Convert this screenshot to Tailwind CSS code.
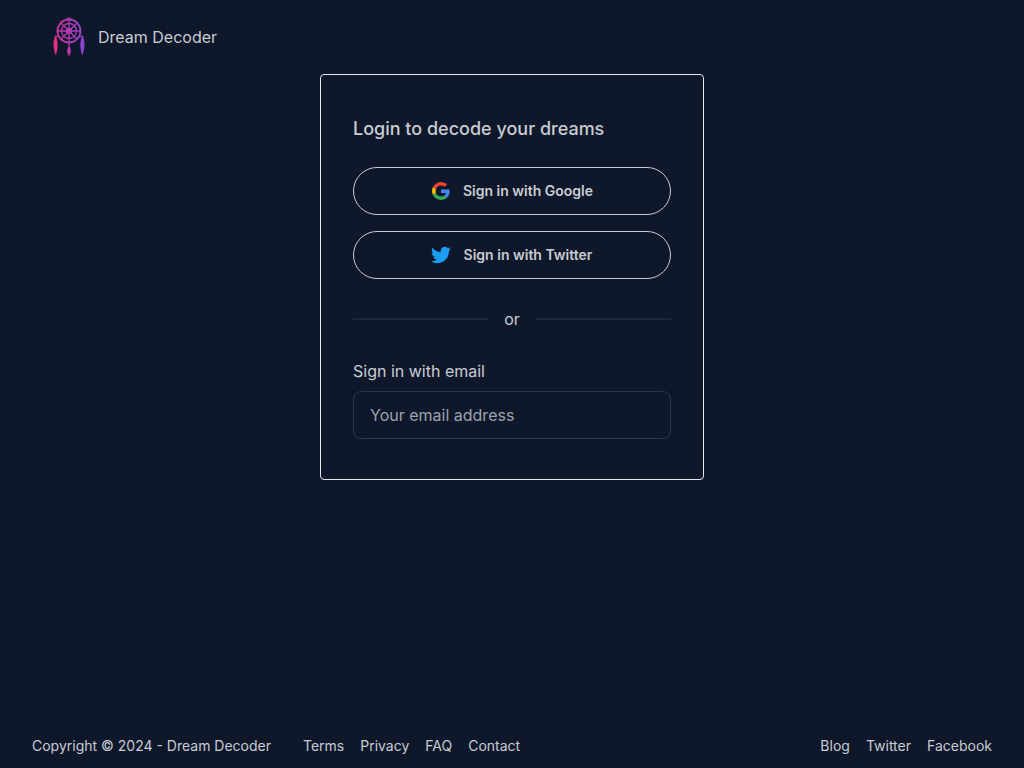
<!doctype html>
<html lang="en">
  <head>
    <meta charset="UTF-8" />
    <title>Dream Decoder</title>
    <script src="https://cdn.jsdelivr.net/npm/@tailwindcss/browser@4"></script>
  </head>

  <body class="bg-[#0f172a] text-[#c8ccd3] font-['Inter',sans-serif] h-[768px] overflow-hidden flex flex-col">
    <header class="h-[74px] pl-[52px] flex items-center gap-[12px] shrink-0">
      <svg width="34" height="40" viewBox="0 0 34 40" fill="none" class="mt-[-1px]">
        <defs>
          <linearGradient id="dc" x1="0" y1="0" x2="34" y2="0" gradientUnits="userSpaceOnUse">
            <stop offset="0" stop-color="#d8329a" />
            <stop offset="1" stop-color="#8e44d0" />
          </linearGradient>
        </defs>
        <g stroke="url(#dc)">
          <path d="M15 2.500C15 .500 19 .500 19 2.500" stroke-width="1.200" />
          <circle cx="17" cy="14" r="11.500" stroke-width="1.800" />
          <circle cx="17" cy="14" r="7.500" stroke-width="1.300" />
          <circle cx="17" cy="14" r="2.500" stroke-width="1.300" />
          <path d="M17 3V25M6 14H28M9.200 6.200L24.800 21.800M24.800 6.200L9.200 21.800" stroke-width="1.300" />
          <path d="M7 20L3.500 19M27 20L30.500 19M17 26V30" stroke-width="1.200" />
        </g>
        <path d="M3.500 18C6.300 24 6.300 31 3.800 38.500C.800 31 .800 24 3.500 18Z" fill="#e0307f" />
        <path d="M17 29C19.500 32 19.500 35.500 17 39.500C14.500 35.500 14.500 32 17 29Z" fill="#c038a8" />
        <path d="M30.500 18C33.200 24 33.200 31 30.200 38.500C27.700 31 27.700 24 30.500 18Z" fill="#8e44d0" />
      </svg>
      <span class="text-base leading-6">Dream Decoder</span>
    </header>

    <main class="flex-1 flex justify-center items-start">
      <div class="w-[384px] h-[406px] border border-[#e5e7eb] rounded px-8 pt-[40px]">
        <h1 class="text-lg leading-7 font-medium">Login to decode your dreams</h1>

        <button class="mt-[24px] w-full h-12 rounded-full border border-[#c8ccd3] flex items-center justify-center gap-3 text-sm font-semibold">
          <span class="w-5 flex justify-center">
            <svg width="18" height="18" viewBox="0 0 48 48">
              <path fill="#EA4335" d="M24 9.500c3.540 0 6.710 1.220 9.210 3.600l6.850-6.850C35.900 2.380 30.470 0 24 0 14.620 0 6.510 5.380 2.560 13.220l7.980 6.190C12.430 13.720 17.740 9.500 24 9.500z" />
              <path fill="#4285F4" d="M46.980 24.550c0-1.570-.150-3.090-.38-4.550H24v9.020h12.940c-.580 2.960-2.260 5.480-4.780 7.180l7.730 6c4.510-4.180 7.090-10.360 7.090-17.650z" />
              <path fill="#FBBC05" d="M10.530 28.590c-.480-1.450-.760-2.990-.760-4.590s.270-3.140.760-4.590l-7.980-6.190C.920 16.460 0 20.120 0 24c0 3.880.920 7.540 2.560 10.780l7.970-6.190z" />
              <path fill="#34A853" d="M24 48c6.480 0 11.930-2.130 15.890-5.810l-7.730-6c-2.150 1.450-4.920 2.300-8.160 2.300-6.260 0-11.570-4.220-13.470-9.910l-7.980 6.190C6.510 42.620 14.620 48 24 48z" />
            </svg>
          </span>
          <span>Sign in with Google</span>
        </button>

        <button class="mt-4 w-full h-12 rounded-full border border-[#c8ccd3] flex items-center justify-center gap-3 text-sm font-semibold">
          <svg width="20" height="20" viewBox="0 0 24 24" class="-translate-x-px">
            <path fill="#1d9bf0" d="M23.950 4.570a10 10 0 0 1-2.820.770 4.960 4.960 0 0 0 2.160-2.720c-.950.550-2 .950-3.130 1.180a4.920 4.920 0 0 0-8.380 4.480C7.690 8.100 4.070 6.130 1.640 3.160a4.820 4.820 0 0 0-.660 2.470c0 1.710.870 3.210 2.190 4.100a4.900 4.900 0 0 1-2.230-.620v.060a4.920 4.920 0 0 0 3.950 4.830 5 5 0 0 1-2.210.080 4.940 4.940 0 0 0 4.600 3.420A9.870 9.870 0 0 1 0 19.540a14 14 0 0 0 7.560 2.210c9.050 0 14-7.500 14-13.980 0-.210 0-.420-.020-.630a9.940 9.940 0 0 0 2.410-2.570z" />
          </svg>
          <span>Sign in with Twitter</span>
        </button>

        <div class="mt-[28px] flex items-center gap-4">
          <div class="flex-1 h-0.5 bg-[#1e2738]"></div>
          <span class="text-base leading-6">or</span>
          <div class="flex-1 h-0.5 bg-[#1e2738]"></div>
        </div>

        <label class="block mt-[28px] text-base leading-6">Sign in with email</label>
        <input
          type="email"
          placeholder="Your email address"
          class="mt-2 w-full h-12 px-4 rounded-lg border border-[#2c3648] bg-transparent text-base placeholder:text-[#9ca3af] outline-none"
        />
      </div>
    </main>

    <footer class="h-[46px] pt-[14px] px-8 flex justify-between items-start text-sm leading-5 shrink-0">
      <div class="flex">
        <span>Copyright © 2024 - Dream Decoder</span>
        <nav class="flex gap-4 ml-8">
          <a href="#">Terms</a>
          <a href="#">Privacy</a>
          <a href="#">FAQ</a>
          <a href="#">Contact</a>
        </nav>
      </div>
      <nav class="flex gap-4">
        <a href="#">Blog</a>
        <a href="#">Twitter</a>
        <a href="#">Facebook</a>
      </nav>
    </footer>
  </body>
</html>
